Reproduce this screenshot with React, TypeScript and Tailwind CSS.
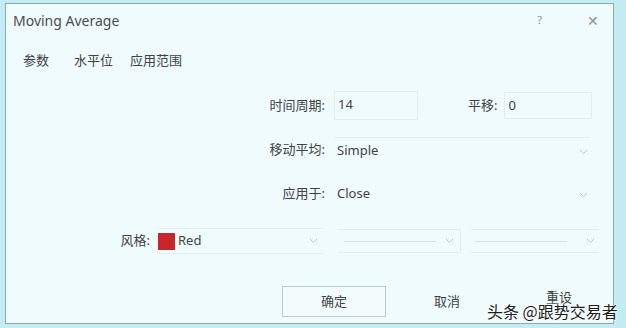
import React from 'react';

const font = { fontFamily: '"Noto Sans", "Noto Sans CJK SC", sans-serif' };

const Chevron: React.FC<{ className?: string }> = ({ className }) => (
    <svg width="9" height="6" viewBox="0 0 9 6" className={className}>
        <path d="M1 1 L4.5 4.5 L8 1" fill="none" stroke="#b9c6c9" strokeWidth="1" />
    </svg>
);

const App: React.FC = () => {
    return (
        <div className="relative w-[626px] h-[328px] bg-[#c6ecf3] pt-[3px] pl-[5px] pr-[12px] pb-[4px] overflow-hidden text-[#3e4346]" style={font}>
            <div className="h-full border border-[#86aeb9] bg-[#effbfc] flex flex-col">
                {/* title bar */}
                <div className="h-[33px] flex items-center pl-[7px] pr-[14px]">
                    <span className="text-[14px] text-[#4a4f52]">Moving Average</span>
                    <span className="ml-auto text-[11px] text-[#8a9396] mr-[45px]">?</span>
                    <span className="text-[14px] text-[#8a9396]">✕</span>
                </div>

                {/* tabs */}
                <div className="h-[50px] flex items-center pl-[17px] text-[13px] pb-[2px]">
                    <span>参数</span>
                    <span className="ml-[25px]">水平位</span>
                    <span className="ml-[17px]">应用范围</span>
                </div>

                {/* period / shift */}
                <div className="flex items-center mt-[4px] h-[29px] text-[13px]">
                    <div className="w-[319px] text-right">时间周期:</div>
                    <div className="ml-[9px] w-[84px] h-[29px] border border-[#e2eef0] flex items-start pt-[3px] pl-[3px]">14</div>
                    <div className="ml-[50px]">平移:</div>
                    <div className="ml-[7px] w-[88px] h-[27px] border border-[#e2eef0] flex items-start pt-[3px] pl-[3px]">0</div>
                </div>

                {/* method */}
                <div className="flex items-center mt-[17px] h-[26px] text-[13px]">
                    <div className="w-[319px] text-right">移动平均:</div>
                    <div className="ml-[9px] w-[256px] h-[26px] border-t border-[#e4eff1] flex items-center pl-[3px] pr-[2px]">
                        <span>Simple</span>
                        <Chevron className="ml-auto mt-[2px]" />
                    </div>
                </div>

                {/* apply to */}
                <div className="flex items-center mt-[18px] h-[26px] text-[13px]">
                    <div className="w-[319px] text-right">应用于:</div>
                    <div className="ml-[9px] w-[256px] h-[26px] flex items-center pl-[3px] pr-[2px]">
                        <span>Close</span>
                        <Chevron className="ml-auto mt-[2px]" />
                    </div>
                </div>

                {/* style */}
                <div className="flex items-center mt-[21px] h-[26px] text-[13px]">
                    <div className="w-[144px] text-right">风格:</div>
                    <div className="ml-[8px] w-[166px] h-[26px] border-t border-b border-[#e4eff1] flex items-center pr-[6px]">
                        <span className="w-[17px] h-[17px] bg-[#c8262a]"></span>
                        <span className="ml-[3px]">Red</span>
                        <Chevron className="ml-auto" />
                    </div>
                    <div className="ml-[14px] w-[123px] h-[24px] border-t border-r border-b border-[#e0ecee] flex items-center pr-[6px]">
                        <span className="ml-[6px] w-[92px] border-t border-[#d6e2e4]"></span>
                        <Chevron className="ml-auto" />
                    </div>
                    <div className="ml-[10px] w-[128px] h-[24px] border-t border-b border-[#e0ecee] flex items-center pr-[4px]">
                        <span className="ml-[4px] w-[92px] border-t border-[#d6e2e4]"></span>
                        <Chevron className="ml-auto" />
                    </div>
                </div>

                {/* buttons */}
                <div className="flex items-center mt-[32px] text-[13px]">
                    <div className="ml-[276px] w-[104px] h-[31px] border border-[#b7ccd1] bg-[#f3fcfd] flex items-center justify-center">确定</div>
                    <div className="ml-[48px]">取消</div>
                    <div className="ml-[86px] -mt-[8px]">重设</div>
                </div>
            </div>

            {/* watermark */}
            <div className="absolute left-[487px] top-[299px] text-[16px] text-[#1c1c1c]" style={{ fontFamily: '"Noto Sans CJK SC", sans-serif', textShadow: '0 0 2px #fff, 0 0 3px #fff' }}>
                头条 @跟势交易者
            </div>
        </div>
    );
};

export default App;
